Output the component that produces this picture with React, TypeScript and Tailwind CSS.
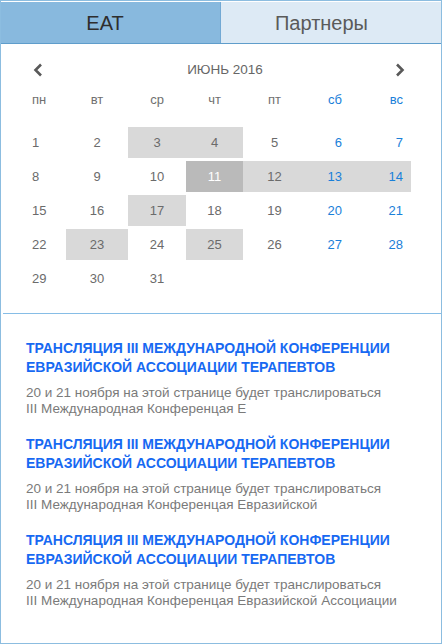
const weekdays = ["пн", "вт", "ср", "чт", "пт", "сб", "вс"];

// per-column alignment of text inside the grid cell
const colAlign = [
  "justify-start pl-[24px]",
  "justify-center",
  "justify-center",
  "justify-center",
  "justify-center pl-[7px]",
  "justify-end pr-[13px]",
  "justify-end pr-[8px]",
];

type Mark = "light" | "dark" | undefined;

const marks: Record<number, Mark> = {
  3: "light",
  4: "light",
  11: "dark",
  12: "light",
  13: "light",
  14: "light",
  17: "light",
  23: "light",
  25: "light",
};

const events = [
  "III Международная Конференцая Е",
  "III Международная Конференцая Евразийской",
  "III Международная Конференцая Евразийской Ассоциации",
];

function Chevron({ dir }: { dir: "left" | "right" }) {
  return (
    <svg width="10" height="14" viewBox="0 0 10 14" className="shrink-0">
      <path
        d={dir === "left" ? "M8 1.5 L2.5 7 L8 12.5" : "M2 1.5 L7.5 7 L2 12.5"}
        fill="none"
        stroke="#595959"
        strokeWidth="2.6"
      />
    </svg>
  );
}

function Calendar() {
  const days: (number | null)[] = [];
  for (let d = 1; d <= 31; d++) days.push(d);

  return (
    <div>
      {/* месяц */}
      <div className="mt-[16px] flex h-[20px] items-center">
        <div className="ml-[32px]">
          <Chevron dir="left" />
        </div>
        <div className="flex-1 pl-[12px] text-center text-[13.5px] text-[#666]">
          ИЮНЬ 2016
        </div>
        <div className="mr-[36px]">
          <Chevron dir="right" />
        </div>
      </div>

      {/* дни недели */}
      <div className="mt-[10px] ml-[7px] grid h-[20px] grid-cols-[58px_62px_58px_57px_56px_56px_56px] items-center text-[13px]">
        {weekdays.map((w, i) => (
          <div
            key={w}
            className={`flex ${colAlign[i]} ${i >= 5 ? "text-[#1a80d9]" : "text-[#707070]"}`}
          >
            {w}
          </div>
        ))}
      </div>

      {/* числа */}
      <div className="mt-[17px] ml-[7px] grid grid-cols-[58px_62px_58px_57px_56px_56px_56px] gap-y-[3px] text-[13px]">
        {days.map((d, idx) => {
          const col = idx % 7;
          const mark = d ? marks[d] : undefined;
          const weekend = col >= 5;
          const bg =
            mark === "dark"
              ? "bg-[#bababa] text-white"
              : mark === "light"
                ? "bg-[#d9d9d9]"
                : "";
          const color =
            mark === "dark" ? "" : weekend ? "text-[#1a80d9]" : "text-[#6b6b6b]";
          return (
            <div
              key={idx}
              className={`flex h-[31px] items-center ${colAlign[col]} ${bg} ${color}`}
            >
              {d}
            </div>
          );
        })}
      </div>
    </div>
  );
}

export default function App() {
  return (
    <div className="h-[644px] w-[442px] border border-[#8cbde0] bg-white font-['Liberation_Sans',Arial,sans-serif]">
      <div className="pt-px">
        {/* вкладки */}
        <div className="flex h-[42px] border-b border-[#5f9dcb]">
          <div className="flex w-[220px] items-center justify-center border-r border-[#72a9d4] bg-[#88b9de] pr-[11px] text-[20px] text-[#2e2e2e]">
            ЕАТ
          </div>
          <div className="flex flex-1 items-center justify-center bg-[#ddeaf5] pr-[19px] text-[20px] text-[#5a5a5a]">
            Партнеры
          </div>
        </div>
      </div>

      <Calendar />

      <div className="mt-[19px] ml-[2px] h-px bg-[#86bde6]" />

      {/* новости */}
      <div className="flex flex-col gap-[19px] pt-[25px] pl-[25px]">
        {events.map((tail, i) => (
          <div key={i}>
            <div className="text-[14px] leading-[19px] font-bold text-[#1769f2]">
              ТРАНСЛЯЦИЯ III МЕЖДУНАРОДНОЙ КОНФЕРЕНЦИИ
              <br />
              ЕВРАЗИЙСКОЙ АССОЦИАЦИИ ТЕРАПЕВТОВ
            </div>
            <div className="mt-[8px] text-[13.5px] leading-[15.5px] text-[#7a7a7a]">
              20 и 21 ноября на этой странице будет транслироваться
              <br />
              {tail}
            </div>
          </div>
        ))}
      </div>
    </div>
  );
}
